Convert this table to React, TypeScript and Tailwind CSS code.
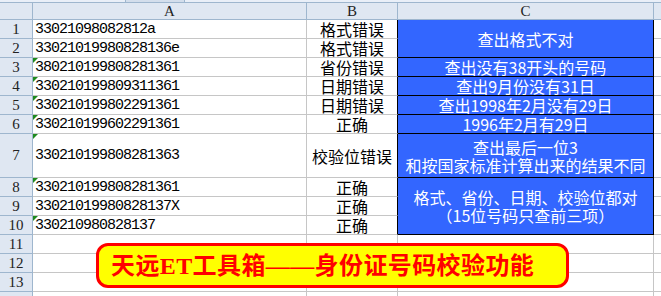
import React from "react"

const GRID = "border-[#c6c6c6]"
const HEAD = "bg-[#dfe7f2] border-[#9eb6ce]"
const cjk = { fontFamily: '"Noto Sans CJK SC", sans-serif' }
const mono = { fontFamily: '"Liberation Mono", monospace' }

type Row = { n: number; a: string; b: string; mark: boolean; c?: { span: string; lines: string[] } }

const rows: Row[] = [
	{ n: 1, a: "33021098082812a", b: "格式错误", mark: false, c: { span: "row-span-2", lines: ["查出格式不对"] } },
	{ n: 2, a: "33021019980828136e", b: "格式错误", mark: false },
	{ n: 3, a: "380210199808281361", b: "省份错误", mark: true, c: { span: "", lines: ["查出没有38开头的号码"] } },
	{ n: 4, a: "330210199809311361", b: "日期错误", mark: true, c: { span: "", lines: ["查出9月份没有31日"] } },
	{ n: 5, a: "330210199802291361", b: "日期错误", mark: true, c: { span: "", lines: ["查出1998年2月没有29日"] } },
	{ n: 6, a: "330210199602291361", b: "正确", mark: true, c: { span: "", lines: ["1996年2月有29日"] } },
	{ n: 7, a: "330210199808281363", b: "校验位错误", mark: true, c: { span: "", lines: ["查出最后一位3", "和按国家标准计算出来的结果不同"] } },
	{ n: 8, a: "330210199808281361", b: "正确", mark: true, c: { span: "row-span-3", lines: ["格式、省份、日期、校验位都对", "（15位号码只查前三项）"] } },
	{ n: 9, a: "33021019980828137X", b: "正确", mark: false },
	{ n: 10, a: "330210980828137", b: "正确", mark: true },
	{ n: 11, a: "", b: "", mark: false },
	{ n: 12, a: "", b: "", mark: false },
	{ n: 13, a: "", b: "", mark: false },
	{ n: 14, a: "", b: "", mark: false },
]

export default function App() {
	return (
		<div className="relative w-[661px] h-[296px] overflow-hidden bg-white text-black">
			{/* top strip */}
			<div className="h-[3px] bg-[#e9eff8] border-b border-[#9eb6ce] flex">
				<div className="ml-[125px] w-[60px] h-full border-x border-[#9eb6ce] bg-[#d3deec]" />
			</div>

			<div className="grid grid-cols-[33px_274px_91px_256px_1fr] grid-rows-[17px_19px_19px_19px_19px_19px_19px_44px_19px_19px_19px_19px_19px_19px_19px]">
				{/* column header */}
				<div className={`${HEAD} border-r border-b`} />
				{["A", "B", "C"].map((l) => (
					<div
						key={l}
						className={`${HEAD} border-r border-b flex items-center justify-center text-[15px] leading-none text-[#222]`}
						style={{ fontFamily: '"Liberation Serif", serif' }}
					>
						{l}
					</div>
				))}
				<div className={`${HEAD} border-b`} />

				{rows.map((r) => (
					<React.Fragment key={r.n}>
						{/* row 14 is cut by the window, its number sits below the edge */}
						<div
							className={`${HEAD} border-r border-b flex items-center justify-center text-[15px] leading-none text-[#222]`}
							style={{ fontFamily: '"Liberation Serif", serif' }}
						>
							{r.n < 14 ? r.n : ""}
						</div>
						<div className={`relative border-r border-b ${GRID} flex items-center pl-[2px] text-[15px] tracking-[-1px] leading-none`} style={mono}>
							{r.mark && <span className="absolute top-0 left-0 w-0 h-0 border-t-[5px] border-r-[5px] border-t-[#1e8a1e] border-r-transparent" />}
							{r.a}
						</div>
						<div
							className={`border-b ${GRID} border-r ${r.n <= 10 ? "border-r-black" : ""} flex items-center justify-center text-[16px] leading-[18px]`}
							style={cjk}
						>
							{r.b}
						</div>
						{r.c && (
							<div
								className={`${r.c.span} bg-[#3366ff] border-r border-b border-black flex flex-col items-center justify-center text-white text-[16px] leading-[18px]`}
								style={cjk}
							>
								{r.c.lines.map((t) => (
									<span key={t}>{t}</span>
								))}
							</div>
						)}
						{r.n > 10 && <div className={`border-r border-b ${GRID}`} />}
						<div className={`border-b ${GRID}`} />
					</React.Fragment>
				))}
			</div>

			{/* floating banner */}
			<div className="absolute left-[96px] top-[243px] w-[473px] h-[45px] rounded-[12px] border-[3px] border-[#ff0000] bg-[#ffff00] flex items-center pl-[12px]">
				<span
					className="text-[24px] font-bold text-[#ff0000] leading-none whitespace-nowrap tracking-[0.4px]"
					style={{ fontFamily: '"Liberation Serif", "Noto Sans CJK SC", serif' }}
				>
					天远ET工具箱——身份证号码校验功能
				</span>
			</div>
		</div>
	)
}
